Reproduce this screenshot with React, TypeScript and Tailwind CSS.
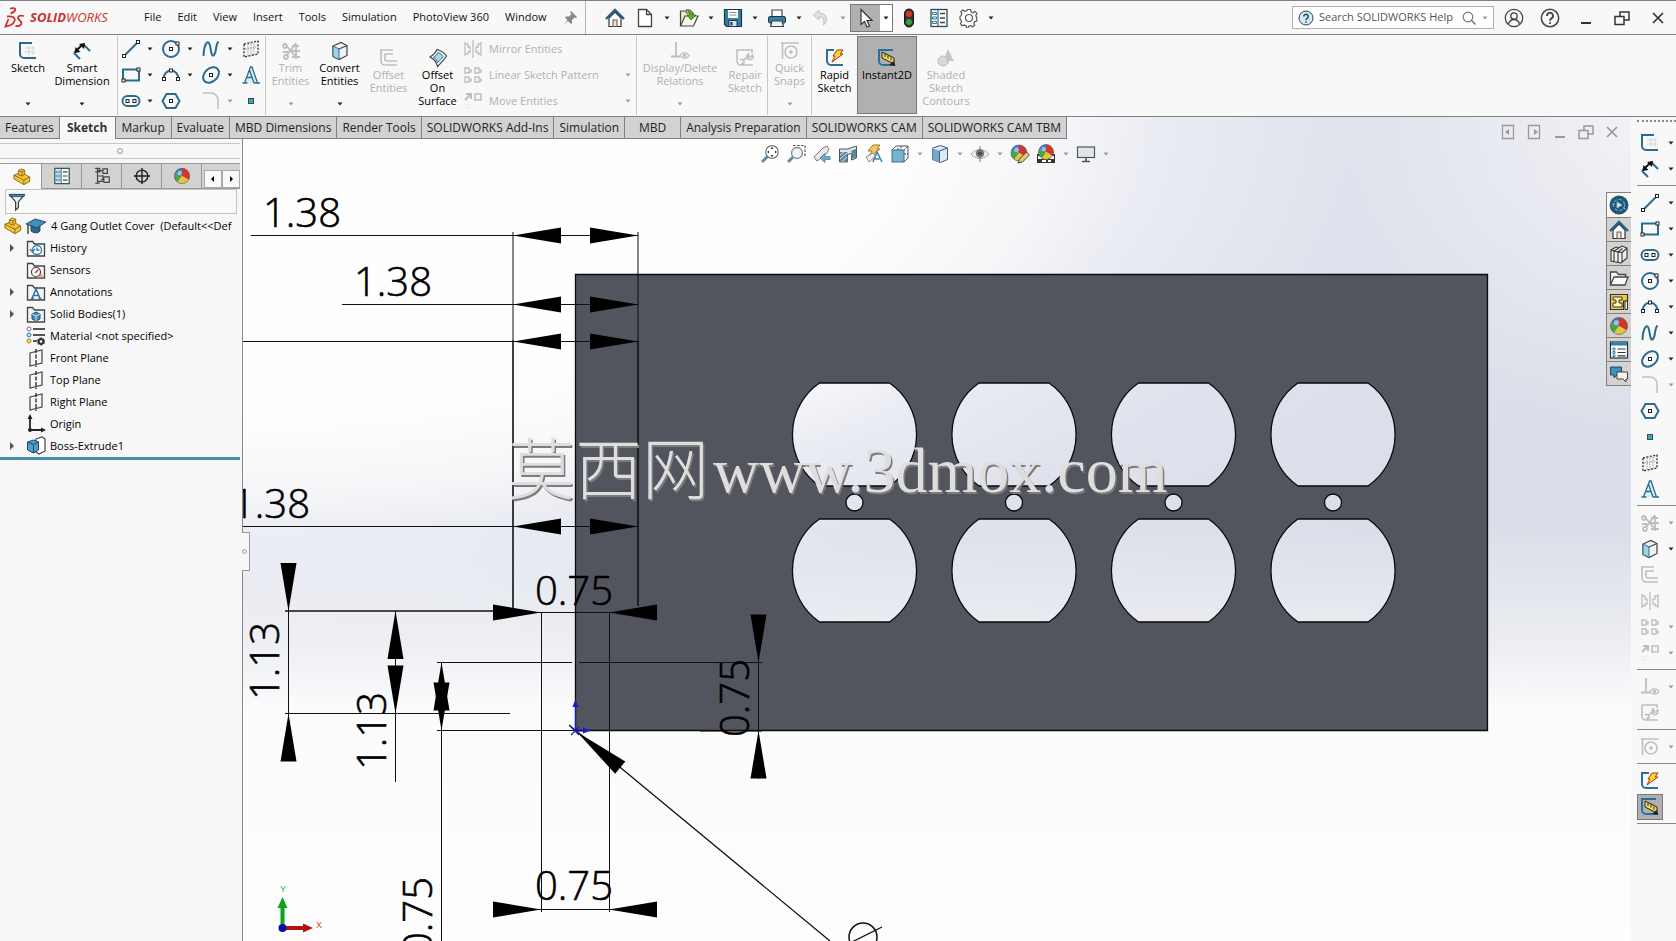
import type { ReactNode } from "react";
import { clsx } from "clsx";

const Dot = ({ x, y }: { x: number; y: number }) => (
  <rect x={x - 1.5} y={y - 1.5} width="3" height="3" fill="#fff" stroke="#222" strokeWidth="1" />
);

const Folder = () => (
  <path d="M1.5 18V3.5h5l2 2.5h10v12z" fill="#f4f4f4" stroke="#444" strokeWidth="1.3" />
);

const Sphere = ({ cx = 10, cy = 10, r = 8.5 }: { cx?: number; cy?: number; r?: number }) => (
  <g transform={`translate(${cx} ${cy}) scale(${r / 10})`}>
    <path d="M0 0V-10A10 10 0 0 1 8.7 5z" fill="#d8322c" />
    <path d="M0 0L8.7 5A10 10 0 0 1 -6 8z" fill="#e8c63a" />
    <path d="M0 0L-6 8A10 10 0 0 1 -9 -4z" fill="#4aa548" />
    <path d="M0 0L-9 -4A10 10 0 0 1 0 -10z" fill="#3a78c8" />
    <circle cx="-3" cy="-4" r="3" fill="#fff" opacity=".5" />
    <circle r="10" fill="none" stroke="#555" strokeWidth=".8" />
  </g>
);

const Part = () => (
  <g stroke="#8a6410" strokeWidth="1" strokeLinejoin="round">
    <path d="M1 8l5-2V3l3-2 4 1.500v4.500l5.500 3v5L12 18.500 1 12z" fill="#f2c53a" />
    <path d="M6 3l4 1.500v4.500L6 7.500V6M10 4.500l3-2M10 9l3-2M1 8l11 5.500 6.500-3.500M12 13.500v5" fill="none" />
  </g>
);

const icons: Record<string, ReactNode> = {
  sketch: (
    <>
      <path d="M7 7h10M7 11h10M11 5v9M15 5v9" stroke="#d5d5d5" strokeWidth="1" />
      <path d="M14 2H2v11a4 4 0 0 0 4 4h12" stroke="currentColor" strokeWidth="2" fill="none" />
    </>
  ),
  dimension: (
    <>
      <path d="M2 12l6 6M11 3l7 7M2 12l3-3M12 4" stroke="currentColor" strokeWidth="2" fill="none" />
      <path d="M4.500 9.500l6-6" stroke="#111" strokeWidth="2" />
      <path d="M2.500 12l1-6 5 5zM13 2l-6 1 5 5z" fill="#111" />
    </>
  ),
  line: (
    <>
      <path d="M3 17L17 3" stroke="currentColor" strokeWidth="2" />
      <Dot x={3} y={17} />
      <Dot x={17} y={3} />
    </>
  ),
  rect: (
    <>
      <rect x="2" y="4.500" width="16" height="11" fill="none" stroke="currentColor" strokeWidth="2" />
      <Dot x={2.5} y={15.5} />
      <Dot x={17.5} y={4.5} />
    </>
  ),
  slot: (
    <>
      <rect x="1.500" y="5" width="17" height="10" rx="5" fill="none" stroke="currentColor" strokeWidth="2" />
      <Dot x={6.5} y={10} />
      <Dot x={13.5} y={10} />
    </>
  ),
  circle: (
    <>
      <circle cx="10" cy="10" r="8" fill="none" stroke="currentColor" strokeWidth="2" />
      <Dot x={10} y={10} />
      <Dot x={16.5} y={4.5} />
    </>
  ),
  arc: (
    <>
      <path d="M2.500 14a7.500 8.500 0 0 1 15 0" fill="none" stroke="currentColor" strokeWidth="2" />
      <Dot x={3} y={14} />
      <Dot x={17} y={14} />
      <Dot x={10} y={5.5} />
    </>
  ),
  spline: (
    <path d="M2.500 17C3 4 7 1 8.500 5s1.500 14 4.500 11 1-10 4.500-13.500" fill="none" stroke="currentColor" strokeWidth="2" />
  ),
  ellipse: (
    <>
      <ellipse cx="10" cy="10" rx="9" ry="6.500" transform="rotate(-42 10 10)" fill="none" stroke="currentColor" strokeWidth="2" />
      <Dot x={10} y={10} />
    </>
  ),
  fillet: <path d="M2 2h8a7 7 0 0 1 7 7v9" fill="none" stroke="currentColor" strokeWidth="1.500" />,
  polygon: (
    <>
      <path d="M5.500 3h9l4 7-4 7h-9l-4-7z" fill="none" stroke="currentColor" strokeWidth="2" />
      <Dot x={10} y={10} />
    </>
  ),
  point: <rect x="7.500" y="7.500" width="5" height="5" fill="#4aa0a8" stroke="#24506a" />,
  plane: (
    <>
      <path d="M3 5l14-3v13L3 18z" fill="none" stroke="#333" strokeWidth="1.400" strokeDasharray="2 1.500" />
      <path d="M10 3v14M4 10l12-2M7 5v12M13 4v12" stroke="#999" strokeWidth="1" strokeDasharray="1.500 1" />
    </>
  ),
  letter: (
    <path d="M1.500 18h5M13 18h6M3.500 18L9.500 2h1.500l5.500 16M8.500 5l4.500 13M6 12.500h5.500" fill="#dcecf5" stroke="currentColor" strokeWidth="1.300" />
  ),
  trim: (
    <path d="M3 2l11 13M15 2L6 14M15 3v15M9 10h10M11 5h7M3 16a2 2 0 1 0 4 0 2 2 0 1 0-4 0M2 5a2 2 0 1 0 4 0 2 2 0 1 0-4 0M2 11h5M11 16h8" fill="none" stroke="currentColor" strokeWidth="1.800" />
  ),
  convert: (
    <>
      <path d="M3 5l8-3.500 6 3v10L9 18.500l-6-3z" fill="#eef5fa" stroke="#444" strokeWidth="1.200" />
      <path d="M3 5l6 3v10.500l-6-3z" fill="#a9cfe2" stroke="#2b6c8e" />
      <path d="M9 8l8-3.500" stroke="#444" strokeWidth="1.200" />
    </>
  ),
  offset: (
    <>
      <path d="M14 2H2v11a4 4 0 0 0 4 4h12" stroke="currentColor" strokeWidth="1.600" fill="none" />
      <path d="M14 6H6v5a2 2 0 0 0 2 2h10" stroke="currentColor" strokeWidth="1.600" fill="none" />
    </>
  ),
  surface: (
    <>
      <path d="M2 9C5 7 8 4 9 1.500c4 1 7 3 9.500 6.500C16 12 13 15 9.500 18.500 8.500 14 5 10.500 2 9z" fill="#eef4f8" stroke="#444" strokeWidth="1.200" />
      <path d="M5.500 9.500c2-1.500 3.500-3 4.500-5 2.500 1 3.500 2 5 4-1.500 2.500-3 4-5.500 6-.5-2-2-4-4-5z" fill="#a9d3ea" stroke="#2b6c8e" />
    </>
  ),
  mirror: <path d="M2 3v14M2 5h3v3h2v5H5v2H2M10 1v18M18 3v14M18 5h-3v3h-2v5h2v2h3" fill="none" stroke="currentColor" strokeWidth="1.300" />,
  pattern: (
    <path d="M2 2v7M2 3h4v2h2v2H6v1H2M12 2v7M12 3h4v2h2v2h-2v1h-4M2 11v7M2 12h4v2h2v2H6v1H2M12 11v7M12 12h4v2h2v2h-2v1h-4" fill="none" stroke="currentColor" strokeWidth="1.300" />
  ),
  move: (
    <>
      <path d="M2 9l5-5M3 3h5v5" fill="none" stroke="currentColor" strokeWidth="2" />
      <rect x="12" y="3" width="6" height="6" fill="none" stroke="currentColor" strokeWidth="1.500" />
      <path d="M2 14h5M2 17h5" stroke="currentColor" strokeDasharray="1 1" opacity=".5" />
    </>
  ),
  relations: (
    <>
      <path d="M6 1v14M1 15.500h9" stroke="currentColor" strokeWidth="1.800" />
      <path d="M10 14.500c2-3.500 7-3.500 9 0-2 3.500-7 3.500-9 0z" fill="#f7f7f7" stroke="currentColor" strokeWidth="1.300" />
      <circle cx="14.500" cy="14.500" r="1.800" fill="currentColor" />
    </>
  ),
  repair: (
    <path d="M17 5V2H2v11a4 4 0 0 0 4 4h12M8 13l4-4M17.500 7a3 3 0 1 1-4-1v3h2zM5 12a2.500 2.500 0 1 1 3 4l-1.500-1.500" fill="none" stroke="currentColor" strokeWidth="1.600" />
  ),
  snaps: (
    <>
      <path d="M1 2h18M2.500 2v16" stroke="currentColor" strokeWidth="1.600" />
      <circle cx="11" cy="11" r="6" fill="none" stroke="currentColor" strokeWidth="1.600" />
      <circle cx="11" cy="11" r="1.800" fill="currentColor" />
    </>
  ),
  rapid: (
    <>
      <path d="M9 2H2v11a4 4 0 0 0 4 4h12" stroke="#2e6f9a" strokeWidth="2" fill="none" />
      <path d="M12 2h6l-3 4h3L7 14l3-6H8z" fill="#ffd23c" stroke="#a33c12" strokeWidth="1" />
    </>
  ),
  instant: (
    <>
      <path d="M16 2H2v11a4 4 0 0 0 4 4h12" stroke="#2e6f9a" strokeWidth="2" fill="none" />
      <path d="M5 4l12 6v6L5 10z" fill="#f5dc5a" stroke="#222" strokeWidth="1" />
      <path d="M8 6v3M11 7.500v3M14 9.500v3" stroke="#222" />
      <path d="M12 17l6.500 1-2-5z" fill="#222" />
    </>
  ),
  shaded: (
    <>
      <path d="M12 1l6 12H7z" fill="#c9c9c9" />
      <circle cx="7" cy="13" r="5" fill="#d8d8d8" stroke="#bbb" />
      <path d="M12 4v11" stroke="#bbb" />
    </>
  ),
  home: (
    <>
      <path d="M4 10v8.500h12V10l-6-6z" fill="#fff" stroke="#333" strokeWidth="1.200" />
      <path d="M1 11l9-9 9 9" fill="none" stroke="#1f5f86" strokeWidth="2.400" />
      <rect x="8" y="12" width="4" height="6.500" fill="#f4e3c8" stroke="#555" />
    </>
  ),
  doc: <path d="M3.500 1.500h8l5 5v12h-13zM11.500 1.500v5h5" fill="#fff" stroke="#444" strokeWidth="1.300" />,
  open: (
    <>
      <path d="M1.500 18V3h5l1.500 2h6v3" fill="#f3e7bc" stroke="#444" strokeWidth="1.200" />
      <path d="M1.500 18L6 8h13l-4.500 10z" fill="#faf6e4" stroke="#444" strokeWidth="1.200" />
      <path d="M7 2c4-1 7 1 7 5h3l-5 5-4-5h3c0-2-1-4-4-5z" fill="#5fae2d" stroke="#2d6b12" strokeWidth=".8" />
    </>
  ),
  save: (
    <>
      <path d="M1.500 1.500h17v17h-15l-2-2z" fill="#2f7fa8" stroke="#234" strokeWidth="1.200" />
      <rect x="5" y="2" width="10" height="8" fill="#fff" />
      <path d="M6.500 4.500h7M6.500 7h7" stroke="#888" />
      <rect x="6" y="12.500" width="8" height="6" fill="#d8e4ea" stroke="#234" />
      <rect x="7.500" y="14" width="2" height="3.500" fill="#234" />
    </>
  ),
  print: (
    <>
      <path d="M5 9V2h10v7" fill="#fff" stroke="#444" strokeWidth="1.200" />
      <rect x="1.500" y="8.500" width="17" height="6.500" rx="1.500" fill="#2f7fa8" stroke="#234" />
      <path d="M5 13h10l1.500 5.500h-13z" fill="#e8f1f6" stroke="#444" strokeWidth="1.200" />
    </>
  ),
  undo: <path d="M8 2L2.500 7 8 12V9c4-.5 6 2 4.500 8 5-4 4-12-4.500-12z" fill="#e3e3e3" stroke="#bdbdbd" />,
  cursor: <path d="M6 1.500v15l3.500-3 2.500 5.500 2.500-1-2.500-5.500h5z" fill="#fff" stroke="#333" strokeWidth="1.200" />,
  traffic: (
    <>
      <rect x="5.500" y="1" width="9" height="18" rx="4.500" fill="#333" stroke="#111" />
      <circle cx="10" cy="6" r="3" fill="#d8352a" />
      <circle cx="10" cy="14" r="3" fill="#3f9a3a" />
    </>
  ),
  list: (
    <>
      <rect x="2" y="1.500" width="16" height="17" fill="#f7fbfd" stroke="#2b4a5a" strokeWidth="1.300" />
      <path d="M9 2v16" stroke="#2b4a5a" />
      <path d="M3.500 4.500h4v2h-4zM3.500 9h4v2h-4zM3.500 13.500h4v2h-4z" fill="#fff" stroke="#2f7fa8" />
      <path d="M11 5.500h5M11 10h5M11 14.500h5" stroke="#444" strokeWidth="1.300" />
    </>
  ),
  gear: (
    <>
      <path d="M8.500 1.500h3l.5 2.300 2 .9 2-1.300 2 2.100-1.200 2 .8 2 .1.500v3l-2 .6-.9 1.700.9 2-2.200 1.500-1.800-1.100-2 .6-.7 1.700H7.600L7 17.700l-1.900-.8-2.100.9-1.500-2.200 1.100-1.800-.7-2-.9-.6V8.500l1-.8.9-2L1.800 3.900l2-1.800 2 1.200 2-.6z" fill="#fff" stroke="#555" strokeWidth="1.200" />
      <circle cx="10" cy="10" r="3.500" fill="none" stroke="#555" strokeWidth="1.200" />
    </>
  ),
  user: (
    <>
      <circle cx="10" cy="10" r="8.700" fill="none" stroke="#444" strokeWidth="1.300" />
      <circle cx="10" cy="8" r="3.200" fill="none" stroke="#444" strokeWidth="1.300" />
      <path d="M4.500 16c1-3.500 3-4.500 5.500-4.500s4.500 1 5.500 4.500" fill="none" stroke="#444" strokeWidth="1.300" />
    </>
  ),
  help: (
    <>
      <circle cx="10" cy="10" r="8.700" fill="none" stroke="#444" strokeWidth="1.500" />
      <path d="M7 8a3 3 0 1 1 4.500 2.400c-1 .6-1.500 1.100-1.500 2.300M10 14.200v1.800" fill="none" stroke="#444" strokeWidth="1.800" />
    </>
  ),
  minimize: <path d="M5 15h10" stroke="currentColor" strokeWidth="2" />,
  restore: (
    <path d="M3 8.500h9v8H3zM8 8.500V4h9v8h-5" fill="none" stroke="currentColor" strokeWidth="1.500" />
  ),
  close: <path d="M5 5l10 10M15 5L5 15" stroke="currentColor" strokeWidth="1.700" />,
  paneLeft: (
    <>
      <path d="M4.500 3.500h11v13h-11z" fill="none" stroke="currentColor" strokeWidth="1.300" />
      <path d="M11 7v6l-4-3z" fill="currentColor" />
    </>
  ),
  paneRight: (
    <>
      <path d="M4.500 3.500h11v13h-11z" fill="none" stroke="currentColor" strokeWidth="1.300" />
      <path d="M10 7v6l4-3z" fill="currentColor" />
    </>
  ),
  zoomFit: (
    <>
      <path d="M2 18l6-6" stroke="#5c8ca3" strokeWidth="3" />
      <circle cx="12" cy="8" r="6.300" fill="#fff" stroke="#777" strokeWidth="1.200" />
      <path d="M12 3l1.500 2h-3zM12 13l1.500-2h-3zM7 8l2-1.500v3zM17 8l-2-1.500v3z" fill="#333" />
    </>
  ),
  zoomArea: (
    <>
      <path d="M7 1.500h12v12" fill="none" stroke="#555" strokeWidth="1.200" strokeDasharray="2.500 1.500" />
      <path d="M2 18l5-5" stroke="#5c8ca3" strokeWidth="3" />
      <circle cx="11" cy="9" r="5.500" fill="#edf5f9" stroke="#888" strokeWidth="1.300" />
    </>
  ),
  prevView: (
    <>
      <path d="M2 13l9-9 4-2 2 3-2 4-10 8z" fill="#e8e8e8" stroke="#777" />
      <path d="M18 12.500h-5V9.500L8 14l5 4.500v-3h5z" fill="#6fa7c4" stroke="#3f7691" strokeWidth=".7" />
    </>
  ),
  section: (
    <>
      <path d="M1.500 5h8l9-3v12l-5 2V9.500l-4 1V18h-8z" fill="#dfe5e9" stroke="#555" />
      <path d="M2 8h7.500v9.500H2zM13.500 6.500l4.500-1.500v8.500l-4.500 1.500z" fill="#5a87a0" />
      <path d="M2 11l4-3M2 15l7-6M4 17.500l5-4.500" stroke="#dbe8ef" />
    </>
  ),
  dynamic: (
    <>
      <path d="M9 1h7l-3 4h3L5 13l3-6H4z" fill="#f4c860" stroke="#a87628" />
      <path d="M2 13l7-4 3 3-7 6z" fill="#eee" stroke="#888" />
      <path d="M9 18l4-10 5 10M10.500 15h5" fill="none" stroke="#4a84a5" strokeWidth="1.600" />
    </>
  ),
  orient: (
    <>
      <path d="M2 6l4-4h12v12l-4 4" fill="#f4f8fa" stroke="#555" />
      <rect x="2" y="6" width="12" height="12" fill="#7bb3cd" stroke="#3f6f88" />
      <path d="M14 6l4-4M8 6V4M11 2v4M14 10h4" stroke="#444" strokeDasharray="2 1" />
    </>
  ),
  display: (
    <>
      <path d="M2.500 4l8-2.500 7 2.500v11.500l-7 3-8-3z" fill="#d7ebf4" stroke="#557" />
      <path d="M2.500 4l7 3v11.500l-7-3z" fill="#6faac6" />
      <path d="M9.500 7l8-3M9.500 7v11.500" stroke="#557" />
    </>
  ),
  hide: (
    <>
      <path d="M1 10c5-6 13-6 18 0-5 6-13 6-18 0z" fill="#eee" stroke="#aaa" />
      <circle cx="10" cy="9.500" r="4.200" fill="#777" />
      <circle cx="10" cy="9.500" r="1.800" fill="#222" />
      <path d="M10 2v16" stroke="#777" />
    </>
  ),
  appearance: (
    <>
      <Sphere cx={9} cy={9} r={8} />
      <path d="M8 19l1.500-4 7-7 3 3-7 7z" fill="#e8c878" stroke="#444" />
    </>
  ),
  scene: (
    <>
      <path d="M1 10h18v9H1z" fill="#333" />
      <path d="M2 12h4v3H2zM14 12h4v3h-4zM6 16h4v2H6zM12 16h3v2h-3z" fill="#fff" />
      <Sphere cx={10} cy={8} r={7.5} />
    </>
  ),
  monitor: (
    <>
      <rect x="1.500" y="3" width="17" height="10.500" fill="#dfe6ea" stroke="#555" strokeWidth="1.200" />
      <path d="M10 14v3M6 17.500h8" stroke="#555" strokeWidth="1.600" />
    </>
  ),
  part: <Part />,
  tree: (
    <path d="M5 2v15M5 4h6M5 10h5M5 16h6M2.500 1.500h5v4h-5M2.500 18h5M11 2h5v5h-5zM11 9v4M12 11h6v6h-6zM9 14h3" fill="none" stroke="#444" strokeWidth="1.300" />
  ),
  target: (
    <>
      <circle cx="10" cy="10" r="6.500" fill="none" stroke="#222" strokeWidth="1.600" />
      <path d="M10 1v18M1 10h18" stroke="#222" strokeWidth="1.600" />
    </>
  ),
  sphere: <Sphere />,
  filter: (
    <>
      <path d="M2 2h16l-6.500 8v6l-3 3v-9z" fill="#e9f4f9" stroke="#333" strokeWidth="1.300" />
      <path d="M2 1.500h16V4H2z" fill="#2f8fb5" stroke="#234" strokeWidth=".8" />
    </>
  ),
  cap: (
    <>
      <path d="M5 9v6c3 2.500 7 2.500 9 0V9z" fill="#2c6b90" stroke="#234" strokeWidth=".8" />
      <path d="M0 8l9-5 11 3-9 6z" fill="#3f8fbe" stroke="#234" strokeWidth=".8" />
      <path d="M2 9v9" stroke="#234" strokeWidth="1.300" />
    </>
  ),
  history: (
    <>
      <Folder />
      <circle cx="11" cy="12" r="4.500" fill="#fff" stroke="#2f7fa8" strokeWidth="1.300" />
      <path d="M11 9.500V12h2.500M4 11l2.500 3L9 11" fill="none" stroke="#2f7fa8" strokeWidth="1.300" />
    </>
  ),
  sensors: (
    <>
      <Folder />
      <path d="M14 12l4 5.500h-7z" fill="#e9a58f" />
      <circle cx="10" cy="12" r="4.500" fill="#fff" stroke="#444" strokeWidth="1.200" />
      <path d="M9 13l3.500-3.500" stroke="#c33" strokeWidth="1.500" />
    </>
  ),
  annotations: (
    <>
      <Folder />
      <path d="M6 16.500L10 7l4 9.500M7.500 13.500h5M5 16.500h3M12.500 16.500h3" fill="none" stroke="#2f6fa8" strokeWidth="1.500" />
    </>
  ),
  bodies: (
    <>
      <Folder />
      <path d="M6 10l4-2 4 2v5l-4 2-4-2z" fill="#3f8fb8" stroke="#1c4c68" />
      <path d="M6 10l4 2 4-2M10 12v5" fill="none" stroke="#cde6f2" />
    </>
  ),
  material: (
    <>
      <path d="M7 3h12M7 9h12M7 15h4" stroke="#222" strokeWidth="1.500" />
      <circle cx="3" cy="3" r="2" fill="#fff" stroke="#869" />
      <circle cx="3" cy="9" r="2" fill="#bfe0f0" stroke="#2f7fa8" />
      <circle cx="3" cy="15" r="2" fill="#f4dc78" stroke="#a87f1c" />
      <circle cx="15" cy="15.500" r="2.600" fill="none" stroke="#333" strokeWidth="2.800" strokeDasharray="2 .7" />
      <circle cx="15" cy="15.500" r="2.400" fill="none" stroke="#333" strokeWidth="1.500" />
    </>
  ),
  refPlane: (
    <>
      <path d="M4 5l12-3v13L4 18z" fill="none" stroke="#444" strokeWidth="1.200" />
      <path d="M10 1v18" stroke="#222" strokeWidth="1.300" strokeDasharray="4 1.500" />
    </>
  ),
  origin: (
    <>
      <path d="M4 3v13h12" fill="none" stroke="#222" strokeWidth="1.800" />
      <path d="M4 0l2.500 5h-5zM20 16l-5-2.500v5z" fill="#222" />
      <circle cx="4" cy="16" r="2" fill="#222" />
    </>
  ),
  extrude: (
    <>
      <path d="M10 3l6-2 3 2v12l-6 3-3-2z" fill="#fff" stroke="#444" strokeWidth="1.200" />
      <path d="M1.500 6l6-2 5 2v8l-5 3-6-3z" fill="#4e9fc9" stroke="#1c4c68" />
      <path d="M1.500 6l6 2.500 5-2.500M7.500 8.500V17" fill="none" stroke="#1c4c68" />
    </>
  ),
  world: (
    <>
      <circle cx="10" cy="10" r="9.500" fill="#1f5878" />
      <circle cx="10" cy="10" r="5.500" fill="none" stroke="#8fc0da" strokeDasharray="3 2" />
      <path d="M8 7l5 3-5 3zM3 9h3M14 13l3 1" fill="#cfe6f2" stroke="#8fc0da" strokeWidth=".8" />
    </>
  ),
  library: (
    <path d="M2 6l5-3 3 1 3-2 5 2v10l-6 5-10-2zM2 6l3 1v11M5 7l5-3M5 7l4 1v10.500M9 8l4.500-3.500M9 8l4 .5v10M13 8.500l5-4.500" fill="#f0f0f0" stroke="#333" strokeWidth="1.100" />
  ),
  folder: (
    <path d="M1.500 17V4h6l2 2.500h7V9M1.500 17L5 9h14l-3 8z" fill="#fafafa" stroke="#444" strokeWidth="1.300" />
  ),
  palette: (
    <>
      <path d="M1.500 2.500h17V9h-4v8.500h-13z" fill="#f2cf3a" stroke="#333" strokeWidth="1.200" />
      <path d="M4 5h9v3h-3v3h3v4H4v-4h3V8H4zM16 9h2.500v8.500H16z" fill="#fdf3bf" stroke="#333" />
    </>
  ),
  properties: (
    <>
      <rect x="1.500" y="2" width="17" height="16" fill="#fff" stroke="#234" strokeWidth="1.200" />
      <path d="M2 2.500h16v3H2z" fill="#2f7fa8" />
      <path d="M4 8h2v2H4zM4 11.500h2v2H4zM4 15h2v1.500H4z" stroke="#2f7fa8" fill="#fff" />
      <path d="M8.500 9h8M8.500 12.500h8M8.500 15.800h8" stroke="#333" strokeWidth="1.200" />
    </>
  ),
  forum: (
    <>
      <path d="M1.500 3h11v8H8l-3 3v-3H1.500z" fill="#3f8fb8" stroke="#1c4c68" />
      <path d="M8 8h10.500v7H17v3l-3-3H8z" fill="#fbeeee" stroke="#444" />
    </>
  ),
};

const Icon = ({ name, size = "size-5", muted = false }: { name: string; size?: string; muted?: boolean }) => (
  <svg viewBox="0 0 20 20" className={clsx("shrink-0", size, muted && "text-[#bebebe]")} fill="none" aria-hidden="true">
    {icons[name]}
  </svg>
);

const Caret = ({ muted = false }: { muted?: boolean }) => (
  <svg viewBox="0 0 8 4" className="h-1 w-2 shrink-0" aria-hidden="true">
    <path d="M1.500 .500h5L4 3.500z" fill={muted ? "#999" : "#222"} />
  </svg>
);

const menus = ["File", "Edit", "View", "Insert", "Tools", "Simulation", "PhotoView 360", "Window"];

const TitleBar = () => (
  <header className="flex h-[35px] items-center border-y border-[#808080] bg-[#f8f8f8] pl-1 pr-2">
    <svg viewBox="0 0 22 22" className="size-[22px]" fill="none" stroke="#c8342f" strokeWidth="1.800" aria-hidden="true">
      <path d="M6 1.500c4-1 6 0 5 2S8 6 6.500 6.500M3 9.500c6-.5 8.500 1 7.500 4.500-1 3-5 5-9 5.500L4.500 12" />
      <path d="M20 9c-4-1-6 0-6 2s3.500 2.500 3.500 5-3 3.500-6 3" />
    </svg>
    <div className="ml-1 w-[114px] text-[13px] italic text-[#c8342f]">
      <span className="font-bold">SOLID</span>WORKS
    </div>
    <nav className="flex gap-4">
      {menus.map((m) => (
        <button key={m}>{m}</button>
      ))}
    </nav>
    <svg viewBox="0 0 20 20" className="ml-[14px] size-5" aria-label="Pin" role="img">
      <path d="M10 3l6 6-1 1-1.500-.5-2.500 2.500v3l-1 1-3-3-4 3.500L6.500 12 4 9.500l1-1h3l2.500-2.500L9 4z" fill="#888" />
    </svg>
    <div className="mx-1 h-full w-px bg-[#b5b5b5]" />
    <div className="ml-[15px] flex items-center gap-2">
      <button aria-label="Home" className="mr-[2px]"><Icon name="home" /></button>
      {["doc", "open", "save", "print", "undo"].map((n) => (
        <button key={n} aria-label={n} className="flex items-center gap-2">
          <Icon name={n} />
          <Caret muted={n === "undo"} />
        </button>
      ))}
    </div>
    <div className="ml-[3px] flex h-7 border border-[#777]">
      <button aria-label="Select" className="flex w-[29px] items-center justify-center bg-[#b0b0b0]">
        <Icon name="cursor" />
      </button>
      <button aria-label="Select options" className="flex w-3 items-center justify-center bg-white">
        <Caret />
      </button>
    </div>
    <div className="ml-[6px] flex items-center gap-[10px]">
      <button aria-label="Rebuild"><Icon name="traffic" /></button>
      <button aria-label="File properties"><Icon name="list" /></button>
      <button aria-label="Options" className="flex items-center gap-2">
        <Icon name="gear" />
        <Caret />
      </button>
    </div>
    <label className="ml-auto mr-[10px] flex h-[23px] w-[202px] items-center border border-[#b0b0b0] bg-white pl-[5px] pr-1">
      <svg viewBox="0 0 16 16" className="size-4" fill="none" aria-hidden="true">
        <circle cx="8" cy="8" r="7" fill="#d7e9f2" stroke="#24465a" />
        <path d="M5.800 6.500a2.200 2.200 0 1 1 3.400 1.800C8.300 8.900 8 9.200 8 10M8 11.300v1.400" stroke="#1f4f6c" strokeWidth="1.600" />
      </svg>
      <input
        aria-label="Search SOLIDWORKS Help"
        placeholder="Search SOLIDWORKS Help"
        className="ml-[5px] w-[142px] outline-none placeholder:text-[#555]"
      />
      <svg viewBox="0 0 16 16" className="mr-1 size-4" fill="none" stroke="#777" strokeWidth="1.200" aria-hidden="true">
        <circle cx="7" cy="7" r="4.800" />
        <path d="M10.500 10.500l4 4" strokeWidth="1.600" />
      </svg>
      <Caret muted />
    </label>
    <div className="flex items-center gap-4 text-[#333]">
      {["user", "help", "minimize", "restore", "close"].map((n) => (
        <button key={n} aria-label={n}><Icon name={n} /></button>
      ))}
    </div>
  </header>
);

type ToolProps = {
  icon: string;
  lines: string[];
  width: string;
  caret?: boolean;
  low?: boolean;
  muted?: boolean;
  active?: boolean;
};

const Tool = ({ icon, lines, width, caret, low, muted, active }: ToolProps) => (
  <button
    className={clsx(
      "flex h-[78px] flex-col items-center leading-[13px]",
      width,
      low ? "pt-3" : "pt-[5px]",
      muted ? "text-[#b0b0b0]" : "text-black",
      active && "bg-[#b0b0b0] outline-1 -outline-offset-1 outline-[#777]"
    )}
  >
    <span className={clsx(!muted && "text-[#2b6c8e]")}><Icon name={icon} muted={muted} /></span>
    {lines.map((l) => (
      <span key={l} className="whitespace-nowrap">{l}</span>
    ))}
    {caret && <span className="mt-auto pb-2"><Caret muted={muted} /></span>}
  </button>
);

const Divider = () => <div className="h-[79px] w-px bg-[#c6c6c6]" />;

const sketchGrid = [
  ["line", true], ["circle", true], ["spline", true], ["plane", false],
  ["rect", true], ["arc", true], ["ellipse", true], ["letter", false],
  ["slot", true], ["polygon", false], ["fillet", true], ["point", false],
] as const;

const Ribbon = () => (
  <div className="flex h-[82px] border-b border-[#808080] bg-[#f8f8f8] pt-px">
    <div className="flex w-[117px] pl-px">
      <Tool icon="sketch" lines={["Sketch"]} width="w-[54px]" caret />
      <Tool icon="dimension" lines={["Smart", "Dimension"]} width="w-[54px]" caret />
    </div>
    <Divider />
    <div className="grid w-[147px] grid-cols-[40px_40px_40px_20px] grid-rows-[26px_26px_26px] pl-[3px] text-[#2b6c8e]">
      {sketchGrid.map(([n, caret]) => (
        <button key={n} aria-label={n} className="flex items-center gap-[5px]">
          <Icon name={n} muted={n === "fillet"} />
          {caret && <Caret muted={n === "fillet"} />}
        </button>
      ))}
    </div>
    <Divider />
    <Tool icon="trim" lines={["Trim", "Entities"]} width="w-[49px]" caret muted />
    <Tool icon="convert" lines={["Convert", "Entities"]} width="w-[49px]" caret />
    <Tool icon="offset" lines={["Offset", "Entities"]} width="w-[49px]" low muted />
    <Tool icon="surface" lines={["Offset", "On", "Surface"]} width="w-[49px]" low />
    <div className="grid w-[174px] grid-rows-[26px_26px_26px] pr-1 text-[#b0b0b0]">
      {[["mirror", "Mirror Entities"], ["pattern", "Linear Sketch Pattern"], ["move", "Move Entities"]].map(([n, label]) => (
        <button key={n} className="flex items-center gap-[6px] pl-px">
          <Icon name={n} muted />
          {label}
          {n !== "mirror" && <span className="ml-auto"><Caret muted /></span>}
        </button>
      ))}
    </div>
    <Divider />
    <Tool icon="relations" lines={["Display/Delete", "Relations"]} width="w-[86px]" caret muted />
    <Tool icon="repair" lines={["Repair", "Sketch"]} width="w-[44px]" low muted />
    <Divider />
    <Tool icon="snaps" lines={["Quick", "Snaps"]} width="w-[43px]" caret muted />
    <Divider />
    <Tool icon="rapid" lines={["Rapid", "Sketch"]} width="w-[45px]" low />
    <Tool icon="instant" lines={["Instant2D"]} width="w-[60px]" low active />
    <Tool icon="shaded" lines={["Shaded", "Sketch", "Contours"]} width="w-[58px]" low muted />
  </div>
);

const tabs = [
  "Features", "Sketch", "Markup", "Evaluate", "MBD Dimensions", "Render Tools", "SOLIDWORKS Add-Ins",
  "Simulation", "MBD", "Analysis Preparation", "SOLIDWORKS CAM", "SOLIDWORKS CAM TBM",
];

const RibbonTabs = () => (
  <div className="relative flex h-[22px] text-xs">
    {tabs.map((t) => (
      <button
        key={t}
        className={clsx(
          "min-w-14 whitespace-nowrap border-r border-[#808080] px-[5px]",
          t === "Sketch" ? "bg-[#f8f8f8] font-bold text-[#333]" : "border-b bg-[#d2d2d2] text-[#222]"
        )}
      >
        {t}
      </button>
    ))}
  </div>
);

const treeItems: [string, string, boolean][] = [
  ["history", "History", true],
  ["sensors", "Sensors", false],
  ["annotations", "Annotations", true],
  ["bodies", "Solid Bodies(1)", true],
  ["material", "Material <not specified>", false],
  ["refPlane", "Front Plane", false],
  ["refPlane", "Top Plane", false],
  ["refPlane", "Right Plane", false],
  ["origin", "Origin", false],
  ["extrude", "Boss-Extrude1", true],
];

const FeatureTree = () => (
  <aside className="relative w-[243px] shrink-0 border-r border-[#888] bg-[#f7f7f7] pr-[2px]">
    <div className="mt-1 flex h-[16px] items-center justify-center border-y border-[#c4c8cc]">
      <span className="size-[6px] rounded-full border border-[#999]" />
    </div>
    <div className="mt-1 flex h-[26px] overflow-hidden border-t border-[#999] pl-[2px]">
      {["part", "list", "tree", "target", "sphere"].map((n) => (
        <button
          key={n}
          aria-label={n}
          className={clsx(
            "flex w-10 items-center justify-center border-r border-[#999]",
            n === "part" ? "bg-[#f9f9f9]" : "border-b bg-[#d2d2d2]"
          )}
        >
          <Icon name={n} size="size-[18px]" />
        </button>
      ))}
      <div className="flex flex-1 items-end border-b border-[#999] bg-[#d2d2d2] pl-[2px]">
        {["M6 3v6L3 6z", "M4 3v6l3-3z"].map((d, i) => (
          <button key={d} aria-label={i ? "Next tabs" : "Previous tabs"} className="flex h-[18px] w-[18px] items-center justify-center border border-[#aaa] bg-[#f9f9f9]">
            <svg viewBox="0 0 10 12" className="h-3 w-[10px]"><path d={d} fill="#000" /></svg>
          </button>
        ))}
      </div>
    </div>
    <label className="ml-[5px] mr-[3px] flex h-[25px] items-center border border-[#c4c4c4] bg-[#f9f9f9] pl-[2px]">
      <Icon name="filter" size="size-[18px]" />
      <input aria-label="Filter" className="w-full bg-transparent pl-1 outline-none" />
    </label>
    <div className="overflow-hidden border-b-[3px] border-[#4a8cab] pt-px text-black">
      <div className="flex h-[22px] items-center whitespace-pre pl-1">
        <Icon name="part" size="size-[18px]" />
        <span className="ml-1 mr-[5px]"><Icon name="cap" /></span>
        4 Gang Outlet Cover  (Default{"<<"}Def
      </div>
      <ul>
        {treeItems.map(([icon, label, arrow]) => (
          <li key={label} className="flex h-[22px] items-center pl-[9px]">
            <svg viewBox="0 0 6 8" className="mr-[11px] h-2 w-[6px]" aria-hidden="true">
              {arrow && <path d="M1 0v8l4-4z" fill="#555" />}
            </svg>
            <Icon name={icon} />
            <span className="ml-1">{label}</span>
          </li>
        ))}
      </ul>
    </div>
    <div className="absolute -right-2 top-[393px] flex h-[39px] w-2 items-center border border-l-0 border-[#999] bg-[#f7f7f7]">
      <span className="size-[5px] rounded-full border border-[#999]" />
    </div>
  </aside>
);

// arrow head 48 long, tip at x,y, body pointing back along the angle
const Head = ({ x, y, a }: { x: number; y: number; a: number }) => (
  <path d="M0 0L48 -8V8z" transform={`translate(${x} ${y}) rotate(${a})`} fill="#000" />
);

const outletX = [854.5, 1014, 1173.5, 1333];

const Model = () => (
  <svg
    viewBox="0 117 1631 824"
    preserveAspectRatio="xMinYMin slice"
    className="absolute inset-0 h-full w-full"
    aria-label="Model view"
    role="img"
  >
    <defs>
      <radialGradient id="sky" gradientUnits="userSpaceOnUse" cx="0" cy="0" r="1700" gradientTransform="translate(243 117) scale(1 .46)">
        <stop offset=".38" stopColor="#fefefe" />
        <stop offset=".48" stopColor="#f6f6f9" />
        <stop offset=".54" stopColor="#eaecf3" />
        <stop offset=".66" stopColor="#dfe2ec" />
        <stop offset=".85" stopColor="#dbdee8" />
      </radialGradient>
      <linearGradient id="floor" x1="0" y1="0" x2="0" y2="1">
        <stop offset=".5" stopColor="#fdfdfd" stopOpacity="0" />
        <stop offset=".64" stopColor="#fdfdfd" stopOpacity=".5" />
        <stop offset=".72" stopColor="#fdfdfd" stopOpacity=".95" />
        <stop offset="1" stopColor="#fdfdfd" />
      </linearGradient>
      <radialGradient id="corner" gradientUnits="userSpaceOnUse" cx="1660" cy="117" r="320">
        <stop offset="0" stopColor="#f6f6f9" stopOpacity=".9" />
        <stop offset="1" stopColor="#f6f6f9" stopOpacity="0" />
      </radialGradient>
      <path
        id="plate"
        fillRule="evenodd"
        d={
          "M575.500 274.500H1487.500V730.500H575.500z" +
          outletX
            .map(
              (x) =>
                [434.5, 570.5]
                  .map((y) => `M${x - 35} ${y - 51.5}H${x + 35}A62.500 62.500 0 0 1 ${x + 35} ${y + 51.5}H${x - 35}A62.500 62.500 0 0 1 ${x - 35} ${y - 51.5}z`)
                  .join("") + `M${x - 8.5} 502.500a8.500 8.500 0 1 1 17 0a8.500 8.500 0 1 1 -17 0z`
            )
            .join("")
        }
      />
    </defs>
    <rect y="117" width="1631" height="824" fill="url(#sky)" />
    <rect y="117" width="1631" height="824" fill="url(#corner)" />
    <rect y="117" width="1631" height="824" fill="url(#floor)" />
    <use href="#plate" fill="#52545e" stroke="#0a0a0e" strokeWidth="1.300" />

    <g stroke="#111" strokeWidth="1" fill="none">
      <path d="M251 235.500H638M342 304.500H638M243 341.500H638M243 526.500H638" />
      <path d="M513 232V340M638 232V340" />
      <path d="M513 340V608M638 340V606" strokeWidth="1.600" />
      <path d="M285 611H500" strokeWidth="1.600" />
      <path d="M285 713.500H510M437 662.500H572M579 662.500H762M437 730.500H575M700 731H762" />
      <path d="M288.500 563V761M395.500 611V782M441.500 662V941M758.500 614V779" />
      <path d="M493 612.500H657M493 909.500H657" />
      <path d="M541.500 612V912M609.500 612V912" />
      <path d="M569 725L830 941" strokeWidth="1.300" />
      <circle cx="863" cy="937" r="14" strokeWidth="1.500" />
      <path d="M850 943L882 927" strokeWidth="1.300" />
    </g>
    {[235.5, 304.5, 341.5, 526.5].map((y) => (
      <g key={y}>
        <Head x={513} y={y} a={0} />
        <Head x={638} y={y} a={180} />
      </g>
    ))}
    {[612.5, 909.5].map((y) => (
      <g key={y}>
        <Head x={541} y={y} a={180} />
        <Head x={609} y={y} a={0} />
      </g>
    ))}
    <Head x={288.5} y={611} a={-90} />
    <Head x={288.5} y={713.5} a={90} />
    <Head x={395.5} y={611} a={90} />
    <Head x={395.5} y={713.5} a={-90} />
    <Head x={441.5} y={662.5} a={90} />
    <Head x={441.5} y={730.5} a={-90} />
    <Head x={758.5} y={662.5} a={-90} />
    <Head x={758.5} y={730.5} a={90} />
    <g transform="translate(577 732) rotate(39.5)">
      <path d="M0 0L56 -8V8z" fill="#000" />
    </g>

    <g className="font-['Open_Sans',sans-serif] text-[40px] font-light" fill="#000" stroke="#000" strokeWidth=".6">
      <text x="263" y="227">1.38</text>
      <text x="354" y="296">1.38</text>
      <text x="232" y="518">1.38</text>
      <text x="535" y="605">0.75</text>
      <text x="535" y="900">0.75</text>
      <text transform="translate(279 700) rotate(-90)">1.13</text>
      <text transform="translate(386 770) rotate(-90)">1.13</text>
      <text transform="translate(432 955) rotate(-90)">0.75</text>
      <text transform="translate(749 737) rotate(-90)">0.75</text>
    </g>

    <g stroke="#1a1ac8" strokeWidth="1.200">
      <path d="M575.500 731V704M575.500 731H584M571 727l8 8M571 735l8-8" />
      <path d="M575.500 699l3 8h-6zM591 730.500l-8 3v-6z" fill="#1a1ac8" stroke="none" />
    </g>

    <path d="M282.500 926V908" stroke="#0aa31e" strokeWidth="4" />
    <path d="M282.500 897l5 11h-10z" fill="#0aa31e" />
    <path d="M284 928H304" stroke="#b3100f" strokeWidth="4" />
    <path d="M313 928l-10-4.500v9z" fill="#b3100f" />
    <circle cx="282.500" cy="928" r="4" fill="#0c0c9c" />
    <g className="font-['Liberation_Sans',sans-serif] text-[9px]">
      <text x="280" y="892" fill="#2fb53c">Y</text>
      <text x="316" y="928" fill="#d04040">X</text>
    </g>

    {[
      { o: 1.5, fill: "#7c7c7c" },
      { o: 0, fill: "#dedede" },
    ].map(({ o, fill }) => (
      <g key={o} fill={fill}>
        <text x={508 + o} y={494 + o} className="font-['Noto_Sans_CJK_SC',sans-serif] text-[67px] font-light">莫西网</text>
        <text x={713 + o} y={492 + o} className="font-['Liberation_Serif',serif] text-[64px]">www.3dmox.com</text>
      </g>
    ))}
  </svg>
);

const viewTools = [
  "zoomFit", "zoomArea", "prevView", "section", "dynamic", "orient", "|", "display", "|", "hide", "|",
  "appearance", "scene", "|", "monitor", "|",
];

const Viewport = () => (
  <main className="relative flex-1">
    <div className="flex items-center justify-center gap-[6px] pr-1 pt-[5px]">
      {viewTools.map((n, i) =>
        n === "|" ? <Caret key={i} muted /> : <button key={n} aria-label={n}><Icon name={n} /></button>
      )}
    </div>
    <div className="absolute right-0 top-[53px] border border-r-0 border-[#8a8078]">
      {["world", "home", "library", "folder", "palette", "sphere", "properties", "forum"].map((n, i) => (
        <button
          key={n}
          aria-label={n}
          className={clsx("flex h-6 w-6 items-center justify-center", i === 0 ? "bg-[#f8f8f8]" : "border-t border-[#8a8078] bg-[#d2d2d2]")}
        >
          <Icon name={n} />
        </button>
      ))}
    </div>
  </main>
);

const sideGroups: [string, boolean][][] = [
  [["sketch", true], ["dimension", true]],
  [
    ["line", true], ["rect", true], ["slot", true], ["circle", true], ["arc", true], ["spline", true],
    ["ellipse", true], ["fillet", true], ["polygon", false], ["point", false], ["plane", false], ["letter", false],
  ],
  [["trim", true], ["convert", true], ["offset", false], ["mirror", false], ["pattern", true], ["move", true]],
  [["relations", true], ["repair", false]],
  [["snaps", true]],
  [["rapid", false], ["instant", false]],
];

const mutedTools = ["fillet", "trim", "offset", "mirror", "pattern", "move", "relations", "repair", "snaps"];

const SideBar = () => (
  <div className="w-[45px] shrink-0 bg-[#f8f8f8] pt-[3px] text-[#2b6c8e]">
    <div className="mb-2 ml-[6px] border-t-2 border-dotted border-[#888]" />
    {sideGroups.map((group, i) => (
      <div key={i}>
        {group.map(([n, caret]) => {
          const muted = mutedTools.includes(n);
          return (
            <button key={n} aria-label={n} className="flex h-[26px] items-center gap-1 pl-[6px]">
              <span className={clsx("p-[3px]", n === "instant" && "bg-[#b0b0b0] outline-1 -outline-offset-1 outline-[#777]")}>
                <Icon name={n} muted={muted} />
              </span>
              {caret && <Caret muted={muted} />}
            </button>
          );
        })}
        <div className="mb-1 ml-[6px] mt-[3px] h-px bg-[#888]" />
      </div>
    ))}
  </div>
);

export default function App() {
  return (
    <div className="flex min-h-screen flex-col overflow-hidden bg-[#f8f8f8] font-['Open_Sans',sans-serif] text-[11px] text-[#111]">
      <TitleBar />
      <Ribbon />
      <div className="flex flex-1">
        <div className="relative flex min-w-0 flex-1 flex-col overflow-hidden">
          <Model />
          <RibbonTabs />
          <div className="flex flex-1">
            <FeatureTree />
            <Viewport />
          </div>
          <div className="absolute right-[9px] top-[5px] flex gap-[6px] text-[#999]">
            {["paneLeft", "paneRight", "minimize", "restore", "close"].map((n) => (
              <button key={n} aria-label={`Document ${n}`}><Icon name={n} /></button>
            ))}
          </div>
        </div>
        <SideBar />
      </div>
    </div>
  );
}
